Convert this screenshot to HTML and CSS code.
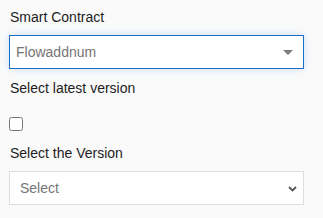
FILE: index.html
```html
<!DOCTYPE html>
<html lang="en">
<head>
  <meta charset="UTF-8" />
  <meta name="viewport" content="width=device-width, initial-scale=1" />
  <title>Smart Contract</title>
  <link rel="stylesheet" href="styles.css">
</head>
<body>
  <div class="form">
    <label class="field-label">Smart Contract</label>
    <div class="dropdown focused">
      <span class="dropdown-value">Flowaddnum</span>
      <svg class="caret" viewBox="0 0 10 5" width="10" height="5">
        <path d="M0 0h10L5 5z" fill="#7a7a7a" />
      </svg>
    </div>

    <label class="field-label spaced">Select latest version</label>
    <div class="check-row">
      <input type="checkbox" class="check" />
    </div>

    <label class="field-label version">Select the Version</label>
    <div class="dropdown plain">
      <span class="dropdown-value">Select</span>
      <svg class="chevron" viewBox="0 0 9 6" width="9" height="6">
        <path d="M1 1l3.5 3.5L8 1" fill="none" stroke="#555" stroke-width="1.8" />
      </svg>
    </div>
  </div>
</body>
</html>
```

FILE: styles.css
```css
* {
  margin: 0;
  padding: 0;
  box-sizing: border-box;
}

body {
  font-family: 'Liberation Sans', Arial, sans-serif;
  background: #fafafa;
  color: #222;
}

.form {
  width: 304px;
  padding: 7px 0 0 9px;
  display: flex;
  flex-direction: column;
}

.field-label {
  display: block;
  font-size: 14px;
  line-height: 20px;
  padding-left: 1px;
  color: #1d1d1d;
}

.field-label.spaced {
  margin-top: 9px;
}

.field-label.version {
  margin-top: 12px;
}

.dropdown {
  margin-top: 8px;
  height: 34px;
  background: #fff;
  display: flex;
  align-items: center;
  justify-content: space-between;
  font-size: 14px;
}

.dropdown.focused {
  border: 1px solid #1c6fc8;
  box-shadow: 0 0 8px rgba(40, 130, 220, 0.22);
  padding: 0 10px 0 6px;
}

.dropdown.plain {
  border: 1px solid #dedede;
  padding: 0 6px 0 10px;
}

.dropdown-value {
  color: #757575;
}

.caret {
  display: block;
  margin-top: 1px;
}

.chevron {
  display: block;
  margin-top: 1px;
}

.check-row {
  margin-top: 19px;
  display: flex;
}

.check {
  width: 14px;
  height: 14px;
  margin: 0;
}
```
